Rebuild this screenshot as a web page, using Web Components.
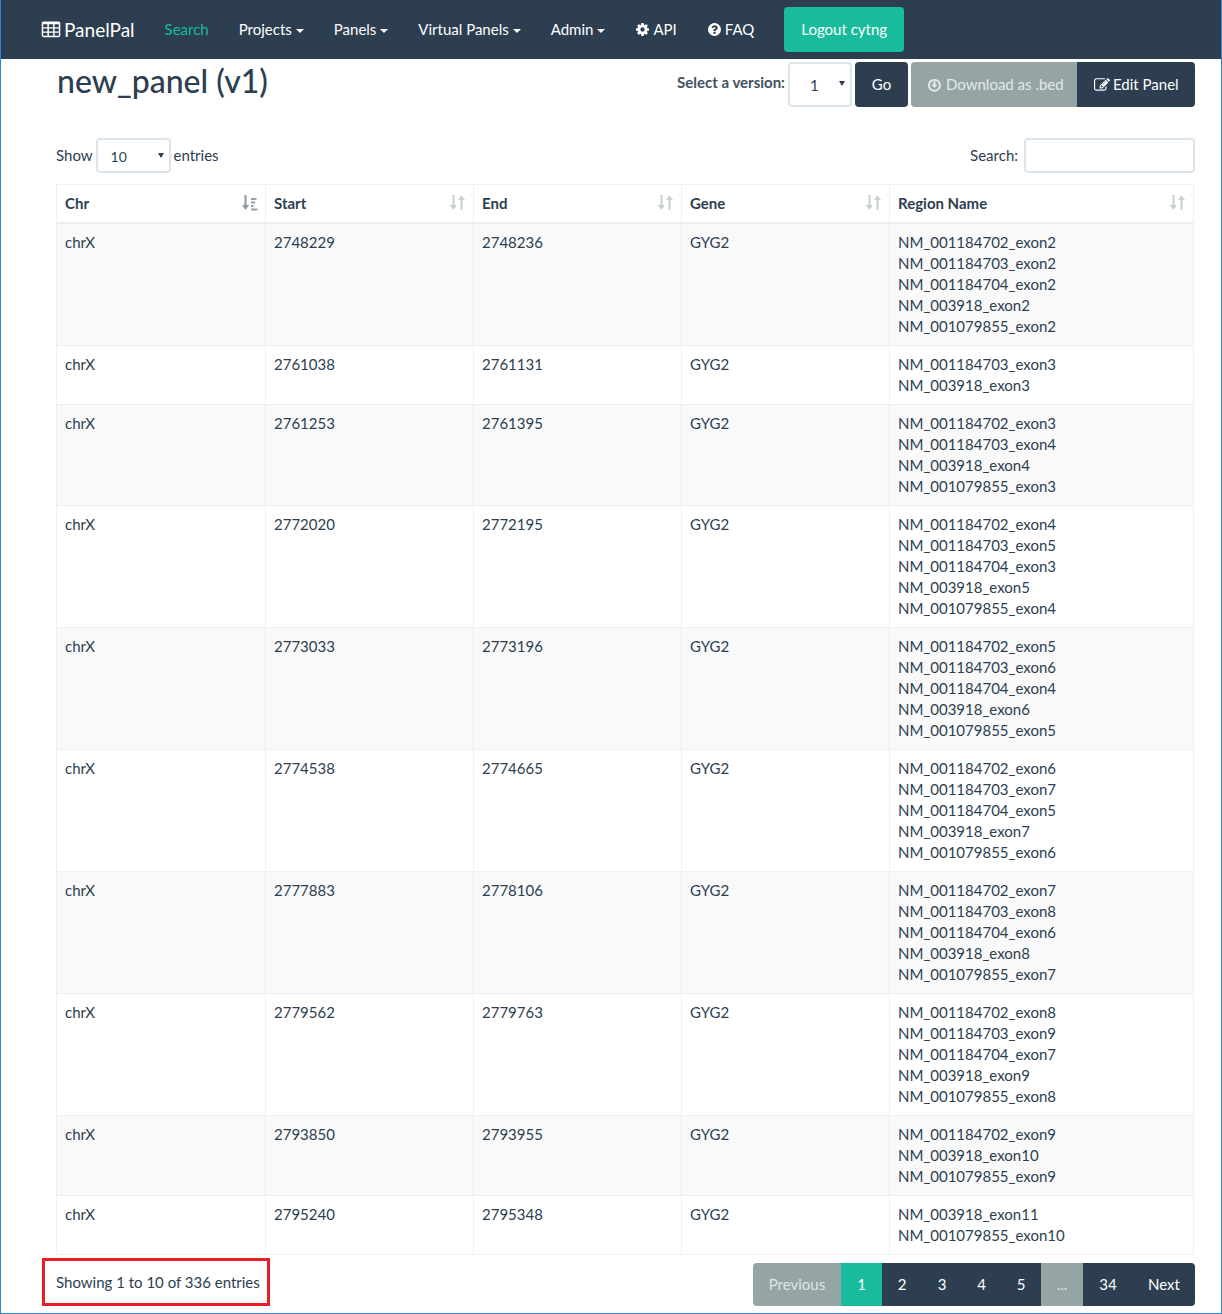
<!DOCTYPE html>
<html>
<head>
<meta charset="utf-8">
<title>PanelPal</title>
<style>
  html, body { margin: 0; padding: 0; background: #fff; }
  body { font: 15px/21px Lato, "Open Sans", sans-serif; color: #2c3e50; }
</style>
</head>
<body>
<panel-window>
  <top-nav slot="nav"></top-nav>
  <panel-header></panel-header>
  <table-controls></table-controls>
  <region-table></region-table>
  <table-footer></table-footer>
</panel-window>

<script>
// font awesome 4 outlines, 1792 box
const ICONS = {
  table: "M576 1376v-192q0-14-9-23t-23-9h-320q-14 0-23 9t-9 23v192q0 14 9 23t23 9h320q14 0 23-9t9-23zm0-384v-193q0-14-9-23t-23-9h-320q-14 0-23 9t-9 23v193q0 14 9 23t23 9h320q14 0 23-9t9-23zm512 384v-192q0-14-9-23t-23-9h-320q-14 0-23 9t-9 23v192q0 14 9 23t23 9h320q14 0 23-9t9-23zm-512-768v-192q0-14-9-23t-23-9h-320q-14 0-23 9t-9 23v192q0 14 9 23t23 9h320q14 0 23-9t9-23zm512 384v-193q0-14-9-23t-23-9h-320q-14 0-23 9t-9 23v193q0 14 9 23t23 9h320q14 0 23-9t9-23zm512 384v-192q0-14-9-23t-23-9h-320q-14 0-23 9t-9 23v192q0 14 9 23t23 9h320q14 0 23-9t9-23zm-512-768v-192q0-14-9-23t-23-9h-320q-14 0-23 9t-9 23v192q0 14 9 23t23 9h320q14 0 23-9t9-23zm512 384v-193q0-14-9-23t-23-9h-320q-14 0-23 9t-9 23v193q0 14 9 23t23 9h320q14 0 23-9t9-23zm0-384v-192q0-14-9-23t-23-9h-320q-14 0-23 9t-9 23v192q0 14 9 23t23 9h320q14 0 23-9t9-23zm128-320v1088q0 66-47 113t-113 47h-1344q-66 0-113-47t-47-113v-1088q0-66 47-113t113-47h1344q66 0 113 47t47 113z",
  cog: "M1152 896q0-106-75-181t-181-75-181 75-75 181 75 181 181 75 181-75 75-181zm512-109v222q0 12-8 23t-20 13l-185 28q-19 54-39 91 35 50 107 138 10 12 10 25t-9 23q-27 37-99 108t-94 71q-12 0-26-9l-138-108q-44 23-91 38-16 136-29 186-7 28-36 28h-222q-14 0-24.5-8.5t-11.5-21.5l-28-184q-49-16-90-37l-141 107q-10 9-25 9-14 0-25-11-126-114-165-168-7-10-7-23 0-12 8-23 15-21 51-66.5t54-70.5q-27-50-41-99l-183-27q-13-2-21-12.5t-8-23.5v-222q0-12 8-23t19-13l186-28q14-46 39-92-40-57-107-138-10-12-10-24 0-10 9-23 26-36 98.5-107.5t94.5-71.5q13 0 26 10l138 107q44-23 91-38 16-136 29-186 7-28 36-28h222q14 0 24.5 8.5t11.5 21.5l28 184q49 16 90 37l142-107q9-9 24-9 13 0 25 10 129 119 165 170 7 8 7 22 0 12-8 23-15 21-51 66.5t-54 70.5q26 50 41 98l183 28q13 2 21 12.5t8 23.5z",
  question: "M1024 1376v-192q0-14-9-23t-23-9h-192q-14 0-23 9t-9 23v192q0 14 9 23t23 9h192q14 0 23-9t9-23zm256-672q0-88-55.5-163t-138.5-116-170-41q-243 0-371 213-15 24 8 42l132 100q7 6 19 6 16 0 25-12 53-68 86-92 34-24 86-24 48 0 85.5 26t37.5 59q0 38-20 61t-68 45q-63 28-115.5 86.5t-52.5 125.5v36q0 14 9 23t23 9h192q14 0 23-9t9-23q0-19 21.5-49.5t54.5-49.5q32-18 49-28.5t46-35 44.5-48 28-60.5 12.5-81zm384 192q0 209-103 385.5t-279.5 279.5-385.5 103-385.5-103-279.5-279.5-103-385.5 103-385.5 279.5-279.5 385.5-103 385.5 103 279.5 279.5 103 385.5z",
  download: "M1120 928q0 12-10 24l-319 319q-11 9-23 9t-23-9l-320-320q-15-16-7-35 8-20 30-20h192v-352q0-14 9-23t23-9h192q14 0 23 9t9 23v352h192q14 0 23 9t9 23zm-352-480q-148 0-273 73t-198 198-73 273 73 273 198 198 273 73 273-73 198-198 73-273-73-273-198-198-273-73zm768 544q0 209-103 385.5t-279.5 279.5-385.5 103-385.5-103-279.5-279.5-103-385.5 103-385.5 279.5-279.5 385.5-103 385.5 103 279.5 279.5 103 385.5z",
  edit: "M888 1184l116-116-152-152-116 116v56h96v96h56zm440-720q-16-16-33 1l-350 350q-17 17-1 33t33-1l350-350q17-17 1-33zm80 594v190q0 119-84.5 203.5t-203.5 84.5h-832q-119 0-203.5-84.5t-84.5-203.5v-832q0-119 84.5-203.5t203.5-84.5h832q63 0 117 25 15 7 18 23 3 17-9 29l-49 49q-14 14-32 8-23-6-45-6h-832q-66 0-113 47t-47 113v832q0 66 47 113t113 47h832q66 0 113-47t47-113v-126q0-13 9-22l64-64q15-15 35-7t20 29zm-96-738l288 288-672 672h-288v-288zm444 132l-92 92-288-288 92-92q28-28 68-28t68 28l152 152q28 28 28 68t-28 68z"
};

function icon(name, size) {
  return `<svg width="${size}" height="${size}" viewBox="0 0 1792 1792" fill="currentColor" style="flex:none"><path d="${ICONS[name]}"/></svg>`;
}

class PanelWindow extends HTMLElement {
  constructor() {
    super();
    this.attachShadow({ mode: "open" });
    this.shadowRoot.innerHTML = `
      <style>
        :host { display: block; box-sizing: border-box; width: 1222px; height: 1314px; overflow: hidden;
          border: 1px solid #2a85d6; border-top: 0; }
        .page { padding: 0 26px 0 55px; }
      </style>
      <slot name="nav"></slot>
      <div class="page"><slot></slot></div>
    `;
  }
}

class TopNav extends HTMLElement {
  constructor() {
    super();
    this.attachShadow({ mode: "open" });
  }

  connectedCallback() {
    const caret = `<i class="caret"></i>`;
    this.shadowRoot.innerHTML = `
      <style>
        :host { display: flex; align-items: flex-start; height: 59px; background: #2c3e50; color: #fff;
          padding-left: 40px; margin-bottom: 0; }
        a { display: flex; align-items: center; height: 59px; color: #fff; white-space: nowrap; }
        .brand { font-size: 19px; gap: 3px; margin-right: 30px; }
        .item { margin-right: 30px; }
        .item.active { color: #18bc9c; }
        .item svg { margin-right: 3px; }
        .caret { display: inline-block; width: 0; height: 0; margin-left: 4px; margin-top: 2px;
          border-top: 4px solid; border-left: 4px solid transparent; border-right: 4px solid transparent; }
        .logout { height: 45px; margin: 7px 0 0 0; padding: 0 17px; border-radius: 4px; background: #18bc9c; }
      </style>
      <a class="brand">${icon("table", 20)}PanelPal</a>
      <a class="item active">Search</a>
      <a class="item">Projects ${caret}</a>
      <a class="item">Panels ${caret}</a>
      <a class="item">Virtual Panels ${caret}</a>
      <a class="item">Admin ${caret}</a>
      <a class="item">${icon("cog", 15)}API</a>
      <a class="item">${icon("question", 15)}FAQ</a>
      <a class="logout">Logout cytng</a>
    `;
  }
}

class PanelHeader extends HTMLElement {
  constructor() {
    super();
    this.attachShadow({ mode: "open" });
  }

  connectedCallback() {
    this.shadowRoot.innerHTML = `
      <style>
        :host { display: flex; justify-content: space-between; align-items: flex-start; height: 79px; }
        h1 { margin: 4px 0 0 1px; font-size: 32px; line-height: 36px; font-weight: 500; }
        .tools { display: flex; align-items: flex-start; padding-top: 3px; }
        .label { font-weight: 700; font-size: 15px; margin: 10px 3px 0 0; color: #2c3e50; opacity: .9; }
        .select { box-sizing: border-box; width: 64px; height: 45px; border: 2px solid #dce4ec; border-radius: 4px;
          display: flex; align-items: center; justify-content: space-between; padding: 2px 5px 0 20px; margin-right: 3px; }
        .arrow { width: 0; height: 0; margin-top: -5px; border-top: 5px solid #2c3e50;
          border-left: 3px solid transparent; border-right: 3px solid transparent; }
        .btn { box-sizing: border-box; height: 45px; display: flex; align-items: center; gap: 3px; color: #fff;
          background: #2c3e50; white-space: nowrap; }
        .go { width: 53px; justify-content: center; border-radius: 4px; margin-right: 3px; }
        .dl { width: 166px; padding-left: 17px; background: #95a5a6; border-radius: 4px 0 0 4px; color: #e4e9e9; }
        .edit { width: 118px; padding-left: 17px; border-radius: 0 4px 4px 0; }
      </style>
      <h1>new_panel (v1)</h1>
      <div class="tools">
        <span class="label">Select a version:</span>
        <div class="select">1<i class="arrow"></i></div>
        <a class="btn go">Go</a>
        <a class="btn dl">${icon("download", 15)}Download as .bed</a>
        <a class="btn edit">${icon("edit", 16)}Edit Panel</a>
      </div>
    `;
  }
}

class TableControls extends HTMLElement {
  constructor() {
    super();
    this.attachShadow({ mode: "open" });
  }

  connectedCallback() {
    this.shadowRoot.innerHTML = `
      <style>
        :host { display: flex; justify-content: space-between; align-items: center; height: 35px; margin-bottom: 11px; font-size: 15px; }
        .side { display: flex; align-items: center; }
        .select { box-sizing: border-box; width: 75px; height: 35px; margin: 0 3px; border: 2px solid #dce4ec; border-radius: 4px;
          display: flex; align-items: center; justify-content: space-between; padding: 2px 5px 0 13px; font-size: 14px; }
        .arrow { width: 0; height: 0; margin-top: -2px; border-top: 5px solid #2c3e50;
          border-left: 3px solid transparent; border-right: 3px solid transparent; }
        .search { box-sizing: border-box; width: 171px; height: 35px; margin-left: 6px; border: 2px solid #dce4ec; border-radius: 4px; }
      </style>
      <div class="side">Show<div class="select">10<i class="arrow"></i></div>entries</div>
      <div class="side">Search:<div class="search"></div></div>
    `;
  }
}

const ROWS = [
  ["2748229", "2748236", ["NM_001184702_exon2", "NM_001184703_exon2", "NM_001184704_exon2", "NM_003918_exon2", "NM_001079855_exon2"]],
  ["2761038", "2761131", ["NM_001184703_exon3", "NM_003918_exon3"]],
  ["2761253", "2761395", ["NM_001184702_exon3", "NM_001184703_exon4", "NM_003918_exon4", "NM_001079855_exon3"]],
  ["2772020", "2772195", ["NM_001184702_exon4", "NM_001184703_exon5", "NM_001184704_exon3", "NM_003918_exon5", "NM_001079855_exon4"]],
  ["2773033", "2773196", ["NM_001184702_exon5", "NM_001184703_exon6", "NM_001184704_exon4", "NM_003918_exon6", "NM_001079855_exon5"]],
  ["2774538", "2774665", ["NM_001184702_exon6", "NM_001184703_exon7", "NM_001184704_exon5", "NM_003918_exon7", "NM_001079855_exon6"]],
  ["2777883", "2778106", ["NM_001184702_exon7", "NM_001184703_exon8", "NM_001184704_exon6", "NM_003918_exon8", "NM_001079855_exon7"]],
  ["2779562", "2779763", ["NM_001184702_exon8", "NM_001184703_exon9", "NM_001184704_exon7", "NM_003918_exon9", "NM_001079855_exon8"]],
  ["2793850", "2793955", ["NM_001184702_exon9", "NM_003918_exon10", "NM_001079855_exon9"]],
  ["2795240", "2795348", ["NM_003918_exon11", "NM_001079855_exon10"]]
];

class RegionTable extends HTMLElement {
  constructor() {
    super();
    this.attachShadow({ mode: "open" });
  }

  sortIcon(active) {
    const bars = active
      ? `<path d="M10 11h2.5v2H10zM10 7.5h4v2h-4zM10 4h5.5v2H10zM10 14.5h6.5v2H10z" opacity=".9"/>`
      : `<path d="M11.5 16V6H9l3.5-5L16 6h-2.5v10z"/>`;
    return `<svg class="sort${active ? " on" : ""}" width="17" height="17" viewBox="0 0 17 17" fill="currentColor">
      <path d="M3.5 1h2v10H8l-3.5 5L1 11h2.5z"/>${bars}</svg>`;
  }

  connectedCallback() {
    const heads = ["Chr", "Start", "End", "Gene", "Region Name"];
    const body = ROWS.map(r => `
      <tr><td>chrX</td><td>${r[0]}</td><td>${r[1]}</td><td>GYG2</td><td>${r[2].join("<br>")}</td></tr>`).join("");
    this.shadowRoot.innerHTML = `
      <style>
        :host { display: block; width: 1138px; }
        table { width: 100%; table-layout: fixed; border-collapse: collapse; font-size: 15px; line-height: 21px; }
        col.c { width: 208px; }
        th, td { border: 1px solid #ecf0f1; padding: 8px; text-align: left; vertical-align: top; }
        th { position: relative; font-weight: 700; border-bottom-width: 2px; padding-top: 8px; padding-bottom: 8px; height: 21px; }
        tbody tr:nth-child(odd) td { background: #f9f9f9; }
        .sort { position: absolute; right: 7px; top: 9px; color: #c9d0d4; }
        .sort.on { color: #8c979f; }
      </style>
      <table>
        <colgroup><col style="width:209px"><col class="c"><col class="c"><col class="c"><col></colgroup>
        <thead><tr>${heads.map((h, i) => `<th>${h}${this.sortIcon(i === 0)}</th>`).join("")}</tr></thead>
        <tbody>${body}</tbody>
      </table>
    `;
  }
}

class TableFooter extends HTMLElement {
  constructor() {
    super();
    this.attachShadow({ mode: "open" });
  }

  connectedCallback() {
    const pages = [["Previous", "off", 88], ["1", "on", 41], ["2", "", 40], ["3", "", 40], ["4", "", 39], ["5", "", 40], ["...", "off", 42], ["34", "", 50], ["Next", "", 62]];
    this.shadowRoot.innerHTML = `
      <style>
        :host { display: flex; justify-content: space-between; align-items: flex-start; height: 58px; padding-top: 0; }
        .info { box-sizing: border-box; width: 228px; height: 48px; margin: 3px 0 0 -14px; padding: 0 0 0 11px;
          display: flex; align-items: center; border: 3px solid #ed1c24; white-space: nowrap; }
        .pages { display: flex; margin-top: 8px; height: 43px; border-radius: 4px; overflow: hidden; }
        a { display: flex; align-items: center; justify-content: center; background: #2c3e50; color: #fff; }
        a.off { background: #95a5a6; color: #dfe5e5; }
        a.on { background: #18bc9c; }
      </style>
      <div class="info">Showing 1 to 10 of 336 entries</div>
      <div class="pages">${pages.map(p => `<a class="${p[1]}" style="width:${p[2]}px">${p[0]}</a>`).join("")}</div>
    `;
  }
}

customElements.define("panel-window", PanelWindow);
customElements.define("top-nav", TopNav);
customElements.define("panel-header", PanelHeader);
customElements.define("table-controls", TableControls);
customElements.define("region-table", RegionTable);
customElements.define("table-footer", TableFooter);
</script>
</body>
</html>
